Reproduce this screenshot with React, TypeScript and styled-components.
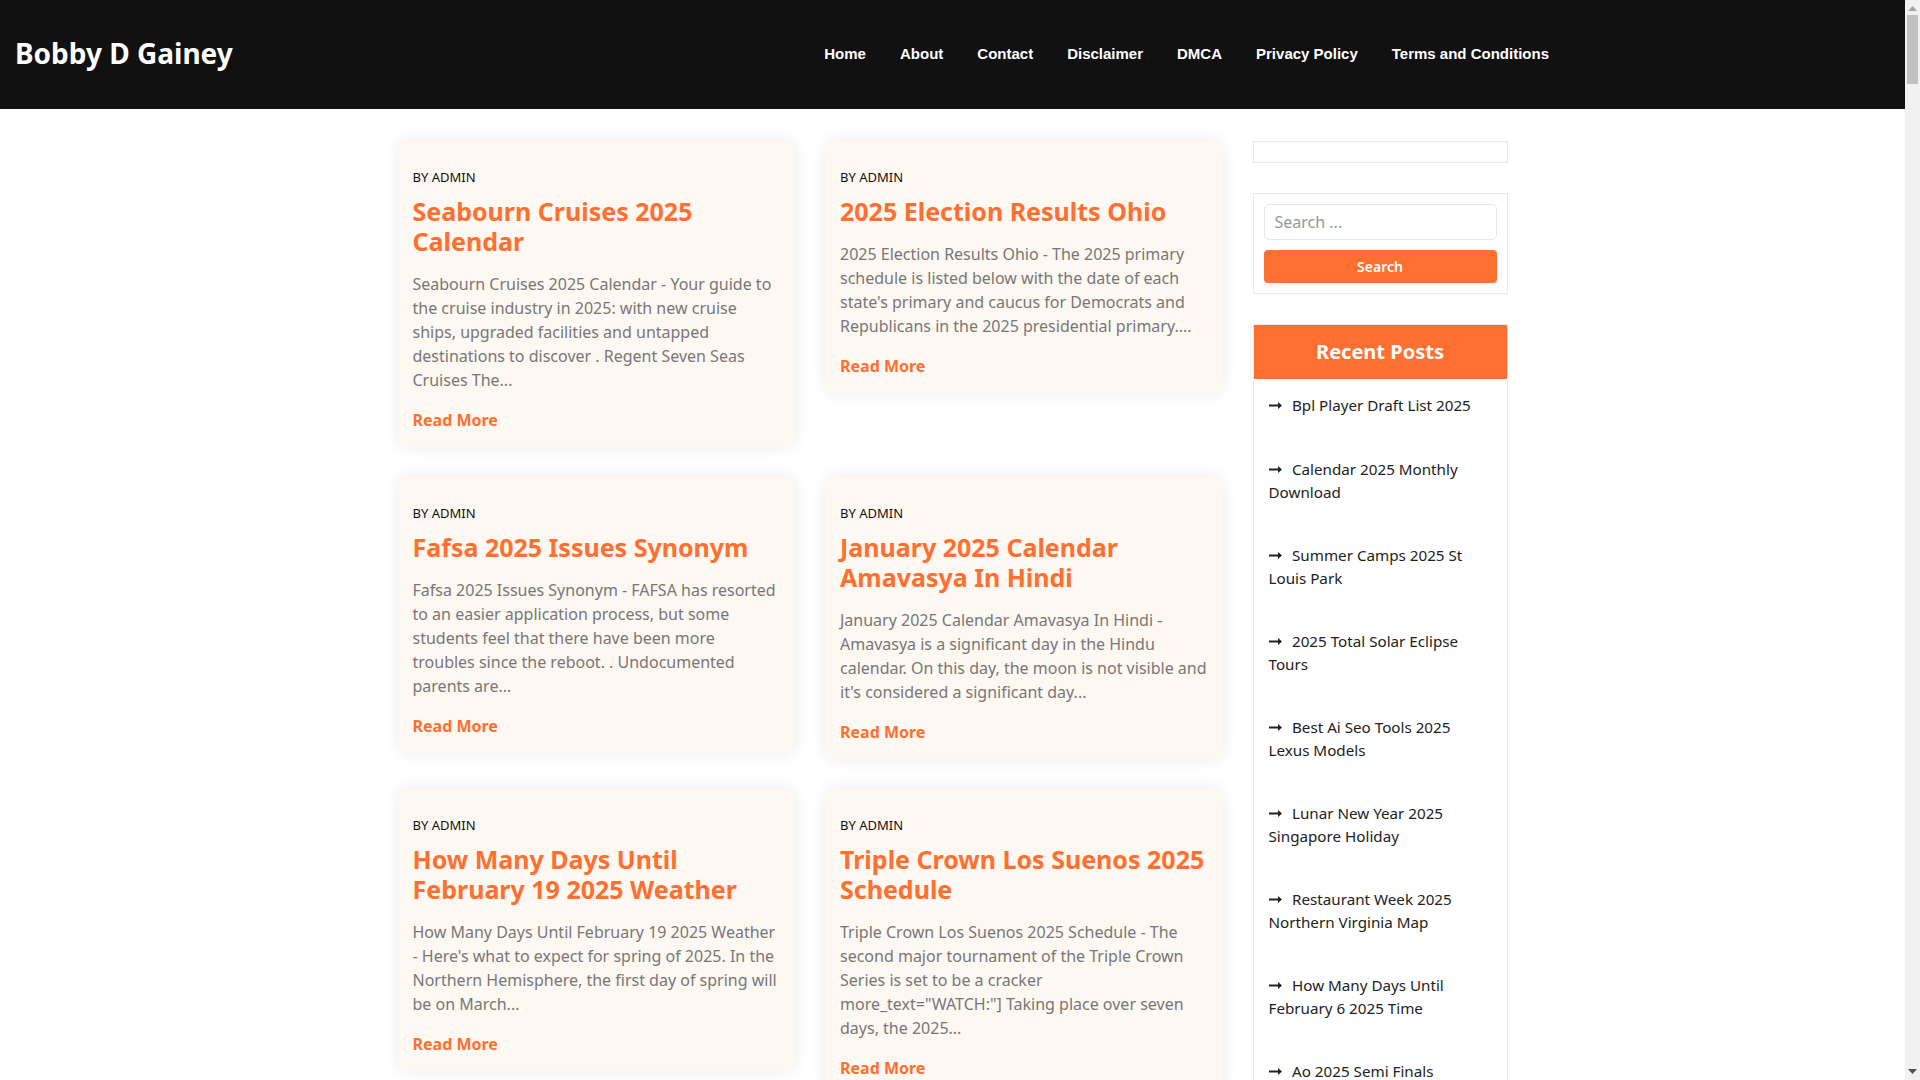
import React from 'react'
import styled, { createGlobalStyle } from 'styled-components'

const orange = '#ff6f30'

const posts = [
  {
    title: 'Seabourn Cruises 2025 Calendar',
    excerpt:
      'Seabourn Cruises 2025 Calendar - Your guide to the cruise industry in 2025: with new cruise ships, upgraded facilities and untapped destinations to discover . Regent Seven Seas Cruises The...',
  },
  {
    title: '2025 Election Results Ohio',
    excerpt:
      "2025 Election Results Ohio - The 2025 primary schedule is listed below with the date of each state's primary and caucus for Democrats and Republicans in the 2025 presidential primary....",
  },
  {
    title: 'Fafsa 2025 Issues Synonym',
    excerpt:
      'Fafsa 2025 Issues Synonym - FAFSA has resorted to an easier application process, but some students feel that there have been more troubles since the reboot. . Undocumented parents are...',
  },
  {
    title: 'January 2025 Calendar Amavasya In Hindi',
    excerpt:
      "January 2025 Calendar Amavasya In Hindi - Amavasya is a significant day in the Hindu calendar. On this day, the moon is not visible and it's considered a significant day...",
  },
  {
    title: 'How Many Days Until February 19 2025 Weather',
    excerpt:
      "How Many Days Until February 19 2025 Weather - Here's what to expect for spring of 2025. In the Northern Hemisphere, the first day of spring will be on March...",
  },
  {
    title: 'Triple Crown Los Suenos 2025 Schedule',
    excerpt:
      'Triple Crown Los Suenos 2025 Schedule - The second major tournament of the Triple Crown Series is set to be a cracker more_text="WATCH:"] Taking place over seven days, the 2025...',
  },
]

const recentPosts = [
  'Bpl Player Draft List 2025',
  'Calendar 2025 Monthly Download',
  'Summer Camps 2025 St Louis Park',
  '2025 Total Solar Eclipse Tours',
  'Best Ai Seo Tools 2025 Lexus Models',
  'Lunar New Year 2025 Singapore Holiday',
  'Restaurant Week 2025 Northern Virginia Map',
  'How Many Days Until February 6 2025 Time',
  'Ao 2025 Semi Finals',
]

const navItems = ['Home', 'About', 'Contact', 'Disclaimer', 'DMCA', 'Privacy Policy', 'Terms and Conditions']

const App: React.FC = () => {
  return (
    <>
      <GlobalStyle />
      <Header>
        <SiteTitle>Bobby D Gainey</SiteTitle>
        <Nav>
          {navItems.map((item) => (
            <NavLink key={item} href="#">
              {item}
            </NavLink>
          ))}
        </Nav>
      </Header>
      <Container>
        <PostGrid>
          {posts.map((post) => (
            <Card key={post.title}>
              <Meta>BY ADMIN</Meta>
              <PostTitle>{post.title}</PostTitle>
              <Excerpt>{post.excerpt}</Excerpt>
              <ReadMore href="#">Read More</ReadMore>
            </Card>
          ))}
        </PostGrid>
        <Sidebar>
          <EmptyWidget />
          <SearchWidget>
            <SearchInput placeholder="Search ..." />
            <SearchButton>Search</SearchButton>
          </SearchWidget>
          <RecentWidget>
            <RecentTitle>Recent Posts</RecentTitle>
            <RecentList>
              {recentPosts.map((item) => (
                <RecentItem key={item}>
                  <ArrowIcon viewBox="0 0 13 7">
                    <path d="M0 2.5h9V0l4 3.5-4 3.5V4.5H0z" />
                  </ArrowIcon>
                  {item}
                </RecentItem>
              ))}
            </RecentList>
          </RecentWidget>
        </Sidebar>
      </Container>
      <Scrollbar>
        <ScrollArrow viewBox="0 0 9 5" fill="#a3a3a3">
          <path d="M4.5 0L9 5H0z" />
        </ScrollArrow>
        <ScrollThumb />
        <ScrollArrow viewBox="0 0 9 5" fill="#505050">
          <path d="M0 0h9L4.5 5z" />
        </ScrollArrow>
      </Scrollbar>
    </>
  )
}

const GlobalStyle = createGlobalStyle`
  * {
    box-sizing: border-box;
  }
  html {
    overflow-x: hidden;
  }
  body {
    margin: 0 15px 0 0;
    background: #fff;
    font-family: 'Noto Sans', sans-serif;
    font-size: 16px;
    line-height: 24px;
  }
`

const Header = styled.header`
  height: 109px;
  padding: 0 356px 2px 15px;
  display: flex;
  align-items: center;
  justify-content: space-between;
  background: #111;
`
const SiteTitle = styled.div`
  margin-bottom: 2px;
  font-size: 28px;
  line-height: 36px;
  font-weight: 700;
  color: #fff;
`
const Nav = styled.nav`
  display: flex;
  gap: 34px;
`
const NavLink = styled.a`
  font-family: 'Liberation Sans', Arial, sans-serif;
  font-size: 15px;
  font-weight: 700;
  color: #fff;
  text-decoration: none;
`

const Container = styled.main`
  width: 1140px;
  margin: 0 auto;
  padding: 32px 15px 0;
  display: grid;
  grid-template-columns: 825px 255px;
  column-gap: 30px;
  align-items: start;
`
const PostGrid = styled.div`
  display: grid;
  grid-template-columns: 1fr 1fr;
  gap: 30px;
  align-items: start;
`
const Card = styled.article`
  padding: 24px 15px 15px;
  background: #fef8f2;
  border-radius: 10px;
  box-shadow: 0 0 15px rgba(0, 0, 0, 0.08);
`
const Meta = styled.div`
  font-size: 13px;
  color: #111;
`
const PostTitle = styled.h2`
  margin: 7px 0 16px;
  font-size: 25px;
  line-height: 30px;
  font-weight: 700;
  color: ${orange};
`
const Excerpt = styled.p`
  margin: 0 0 16px;
  color: #777;
`
const ReadMore = styled.a`
  display: block;
  font-weight: 700;
  color: ${orange};
  text-decoration: none;
`

const Sidebar = styled.aside`
  display: flex;
  flex-direction: column;
  gap: 30px;
`
const EmptyWidget = styled.div`
  height: 22px;
  border: 1px solid #e8e8f0;
`
const SearchWidget = styled.form`
  padding: 10px;
  display: flex;
  flex-direction: column;
  gap: 10px;
  border: 1px solid #e8e8f0;
`
const SearchInput = styled.input`
  height: 36px;
  padding: 0 10px;
  border: 1px solid #e4e7f0;
  border-radius: 5px;
  font-family: inherit;
  font-size: 16px;
  outline: none;
  &::placeholder {
    color: #8d9a9a;
  }
`
const SearchButton = styled.button`
  height: 33px;
  border: 0;
  border-radius: 4px;
  background: ${orange};
  font-family: inherit;
  font-size: 14px;
  font-weight: 600;
  color: #fff;
`
const RecentWidget = styled.section`
  border: 1px solid #e8e8f0;
`
const RecentTitle = styled.h3`
  margin: 0;
  height: 54px;
  display: flex;
  align-items: center;
  justify-content: center;
  background: ${orange};
  font-size: 20px;
  font-weight: 700;
  color: #fff;
`
const RecentList = styled.ul`
  margin: 0;
  padding: 15px;
  list-style: none;
`
const RecentItem = styled.li`
  margin-bottom: 40px;
  font-size: 15.2px;
  line-height: 23px;
  color: #222;
  &:first-child {
    margin-bottom: 41px;
  }
`
const ArrowIcon = styled.svg`
  width: 13px;
  height: 7px;
  margin-right: 10.5px;
  fill: #222;
  vertical-align: 2px;
`

const Scrollbar = styled.div`
  position: fixed;
  top: 0;
  right: 0;
  bottom: 0;
  width: 15px;
  padding: 6px 0;
  display: flex;
  flex-direction: column;
  align-items: center;
  background: #f1f1f1;
`
const ScrollArrow = styled.svg`
  width: 9px;
  height: 5px;
  flex: none;
`
const ScrollThumb = styled.div`
  width: 11px;
  height: 69px;
  margin: 4px 0 auto;
  background: #c1c1c1;
`

export default App
